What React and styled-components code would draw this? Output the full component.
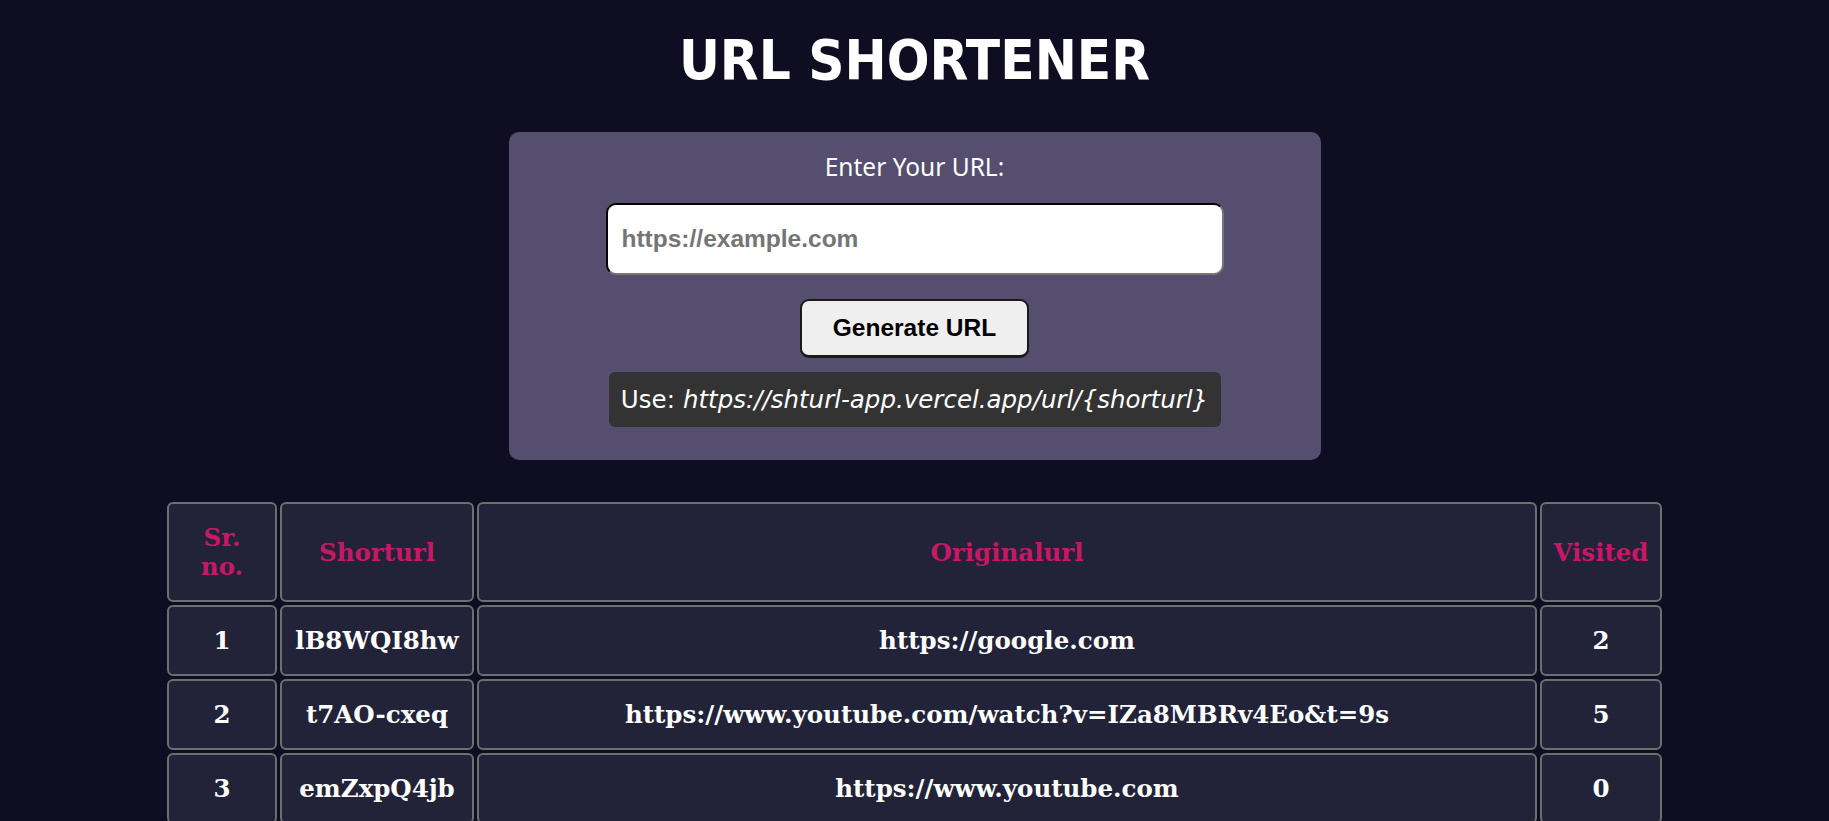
import React, { useState } from "react";
import styled, { createGlobalStyle } from "styled-components";

const GlobalStyle = createGlobalStyle`
  html, body {
    margin: 0;
    padding: 0;
    background: #0f0d21;
  }
  body {
    min-height: 100vh;
    font-family: "Noto Sans", "DejaVu Sans", sans-serif;
    color: #fff;
  }
`;

const Page = styled.div`
  display: flex;
  flex-direction: column;
  align-items: center;
  padding-top: 26px;
`;

const Title = styled.h1`
  margin: 0;
  font-family: "DejaVu Sans", sans-serif;
  font-stretch: condensed;
  font-size: 56px;
  line-height: 68px;
  font-weight: 700;
  color: #fff;
`;

const Card = styled.form`
  margin-top: 38px;
  width: 812px;
  box-sizing: border-box;
  padding: 19px 0 33px;
  background: #554e6e;
  border-radius: 10px;
  display: flex;
  flex-direction: column;
  align-items: center;
`;

const Label = styled.label`
  font-family: "Noto Sans", sans-serif;
  font-size: 24.5px;
  line-height: 31px;
  color: #fff;
`;

const Input = styled.input`
  margin-top: 21px;
  width: 618px;
  height: 72px;
  box-sizing: border-box;
  padding: 0 14px;
  border: 2px inset #767676;
  border-top-color: #2a2a2a;
  border-left-color: #2a2a2a;
  border-radius: 10px;
  background: #fff;
  font-family: "Liberation Sans", Arial, sans-serif;
  font-weight: 700;
  font-size: 24.5px;
  color: #222;
  outline: none;

  &::placeholder {
    color: #757575;
  }
`;

const Button = styled.button`
  margin-top: 24px;
  width: 229px;
  height: 59px;
  box-sizing: border-box;
  background: #efefef;
  border: 2px solid #1a1a1a;
  border-bottom-width: 3px;
  border-radius: 9px;
  font-family: "Liberation Sans", Arial, sans-serif;
  font-weight: 700;
  font-size: 24.5px;
  color: #000;
  cursor: pointer;
`;

const Hint = styled.div`
  margin-top: 14px;
  width: 612px;
  height: 55px;
  box-sizing: border-box;
  display: flex;
  align-items: center;
  justify-content: center;
  background: #333333;
  border-radius: 6px;
  font-family: "DejaVu Sans", sans-serif;
  font-size: 24.5px;
  color: #fff;
  white-space: nowrap;

  em {
    margin-left: 8px;
    font-style: italic;
  }
`;

const Table = styled.table`
  margin-top: 39px;
  border-spacing: 3px;
  table-layout: fixed;
  width: 1501px;
`;

const Cell = styled.td`
  background: #222239;
  border: 2px solid #6e6e6e;
  border-radius: 6px;
  padding: 19px 6px;
  text-align: center;
  font-family: "DejaVu Serif", "Liberation Serif", serif;
  font-weight: 700;
  font-size: 24.5px;
  line-height: 29px;
  color: ${(p) => (p.$head ? "#c71866" : "#fff")};
`;

const rows = [
  { id: 1, short: "lB8WQI8hw", url: "https://google.com", visited: 2 },
  {
    id: 2,
    short: "t7AO-cxeq",
    url: "https://www.youtube.com/watch?v=IZa8MBRv4Eo&t=9s",
    visited: 5,
  },
  { id: 3, short: "emZxpQ4jb", url: "https://www.youtube.com", visited: 0 },
];

export default function App() {
  const [url, setUrl] = useState("");

  return (
    <Page>
      <GlobalStyle />
      <Title>URL SHORTENER</Title>
      <Card onSubmit={(e) => e.preventDefault()}>
        <Label htmlFor="url">Enter Your URL:</Label>
        <Input
          id="url"
          type="text"
          placeholder="https://example.com"
          value={url}
          onChange={(e) => setUrl(e.target.value)}
        />
        <Button type="submit">Generate URL</Button>
        <Hint>
          Use:<em>https://shturl-app.vercel.app/url/{"{shorturl}"}</em>
        </Hint>
      </Card>
      <Table>
        <colgroup>
          <col style={{ width: 110 }} />
          <col style={{ width: 194 }} />
          <col style={{ width: 1060 }} />
          <col style={{ width: 122 }} />
        </colgroup>
        <thead>
          <tr>
            <Cell as="th" $head>
              Sr.
              <br />
              no.
            </Cell>
            <Cell as="th" $head>Shorturl</Cell>
            <Cell as="th" $head>Originalurl</Cell>
            <Cell as="th" $head>Visited</Cell>
          </tr>
        </thead>
        <tbody>
          {rows.map((r) => (
            <tr key={r.id}>
              <Cell>{r.id}</Cell>
              <Cell>{r.short}</Cell>
              <Cell>{r.url}</Cell>
              <Cell>{r.visited}</Cell>
            </tr>
          ))}
        </tbody>
      </Table>
    </Page>
  );
}
